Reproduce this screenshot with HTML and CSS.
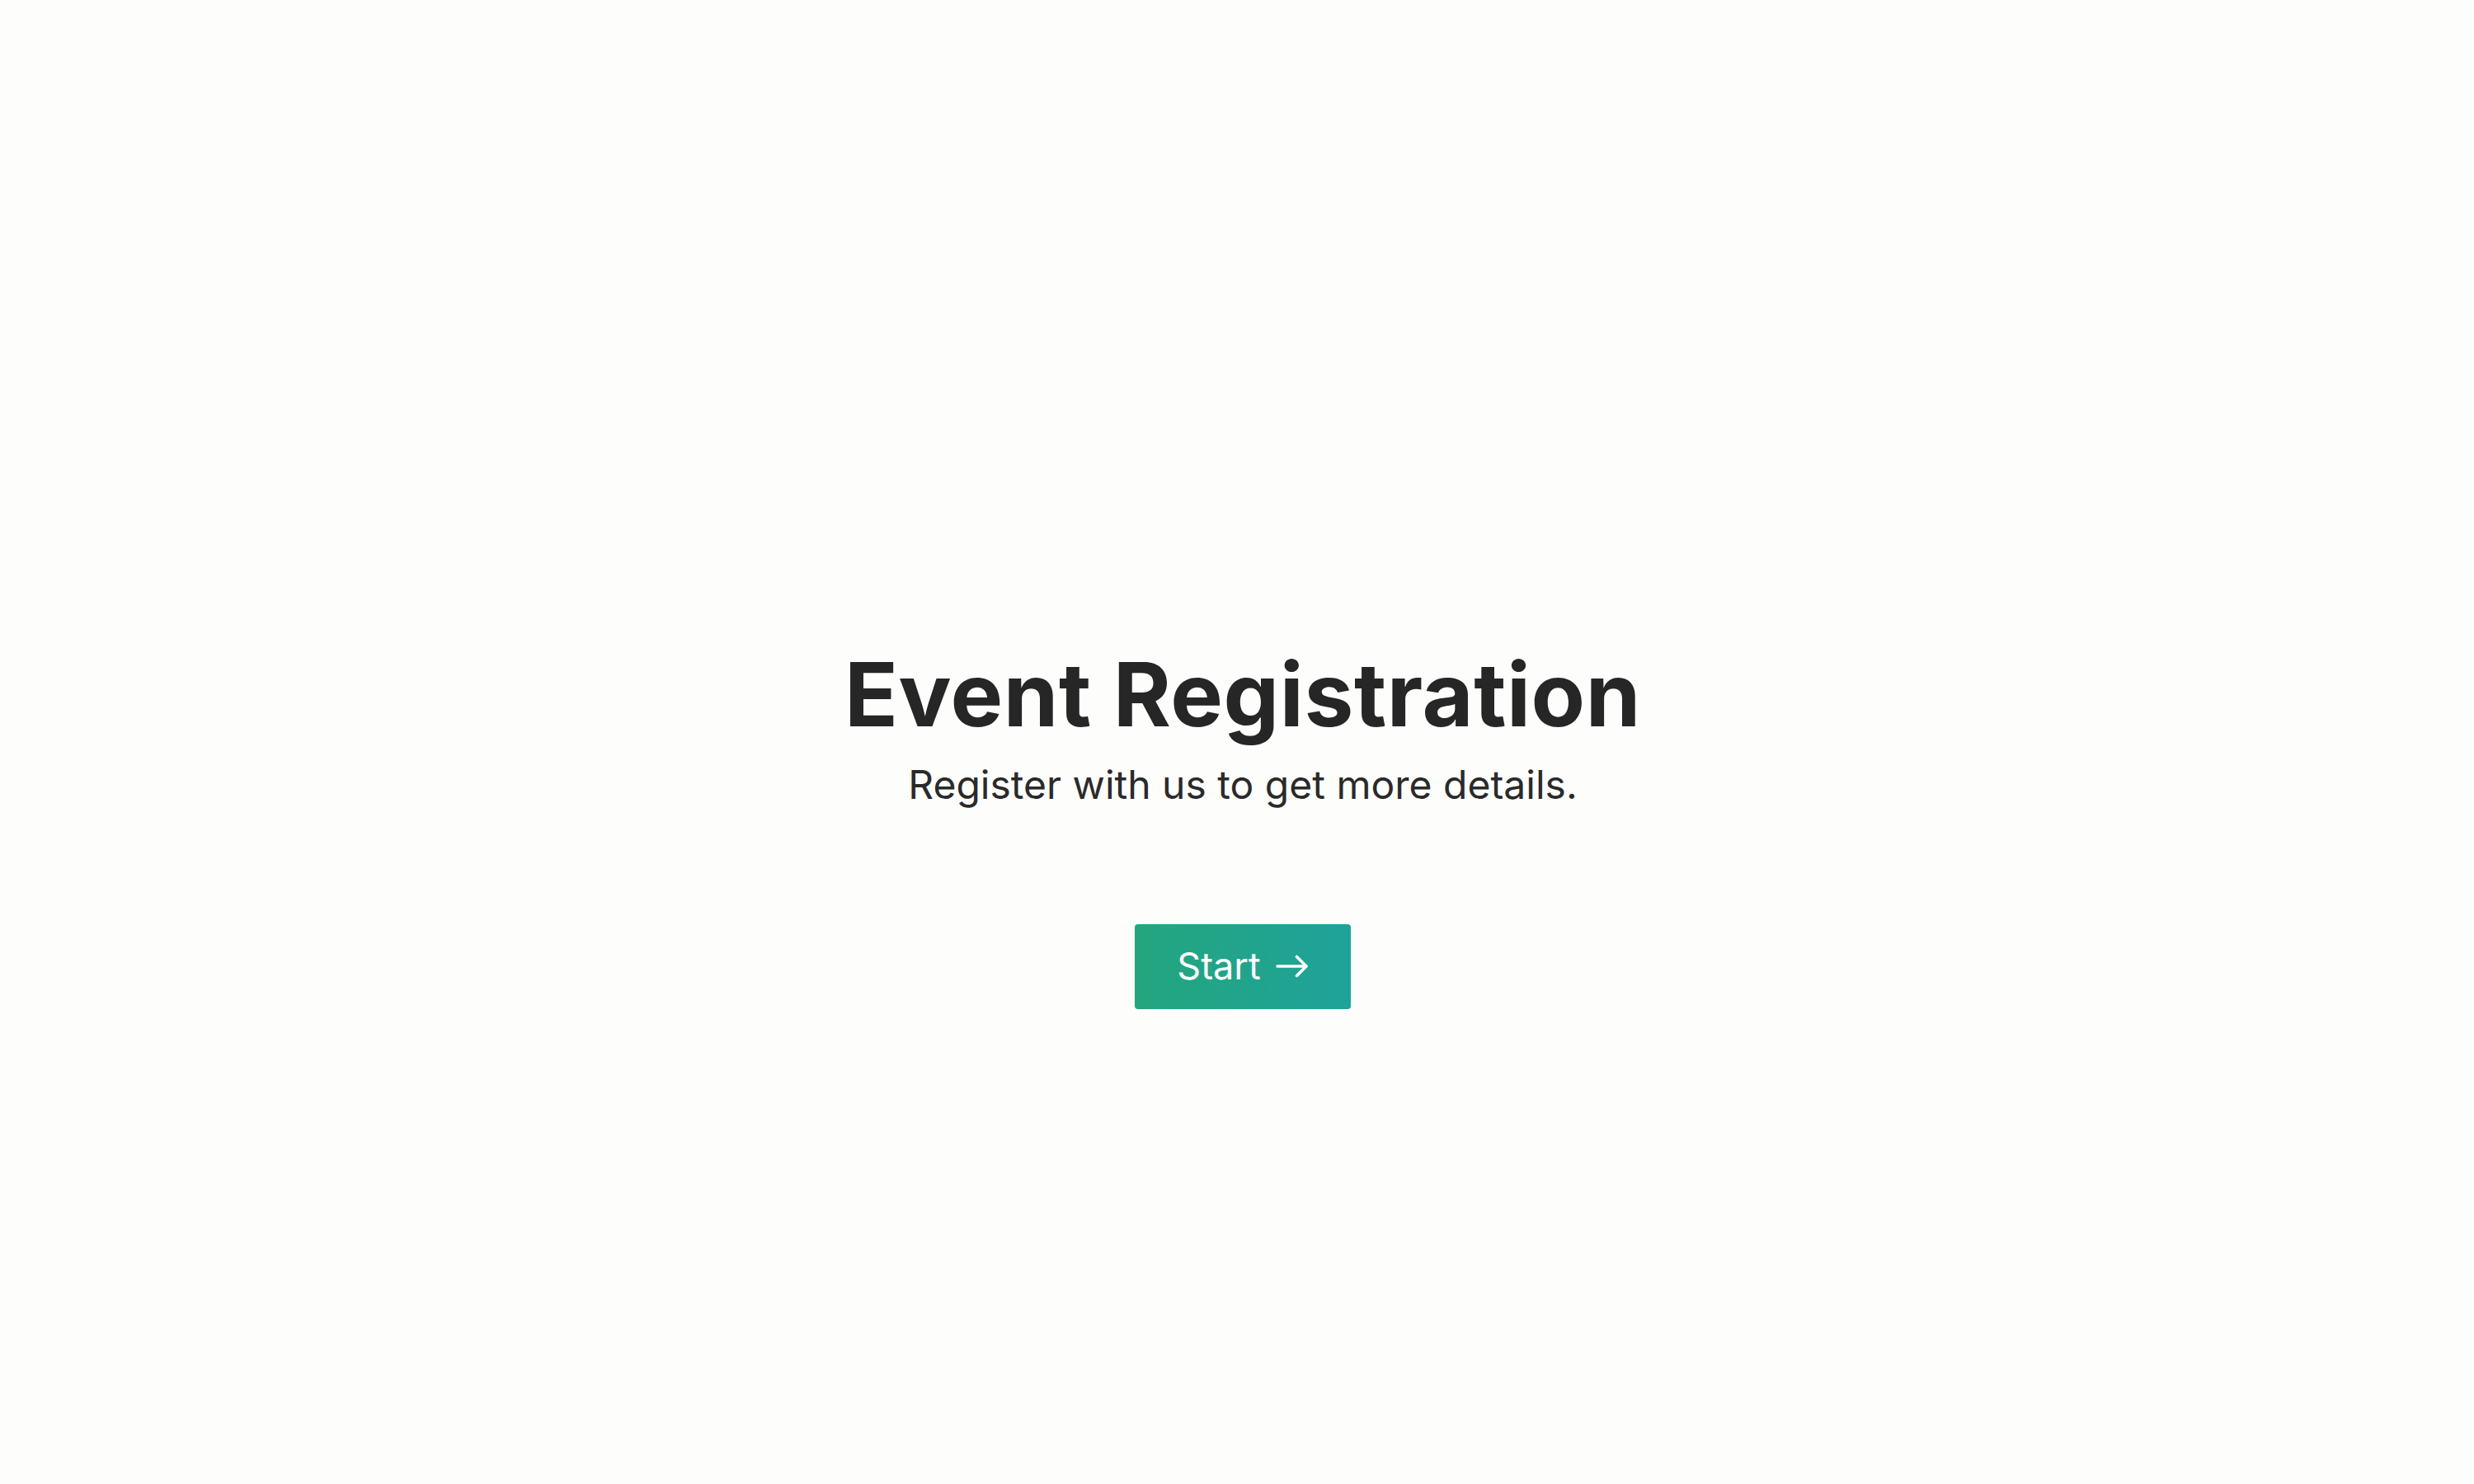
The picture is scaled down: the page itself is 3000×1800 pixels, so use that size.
FILE: index.html
```html
<!DOCTYPE html>
<html lang="en">
<head>
<meta charset="utf-8">
<title>Event Registration</title>
<link rel="stylesheet" href="styles.css">
</head>
<body>
<main class="page">
  <section class="intro">
    <h1 class="title">Event Registration</h1>
    <p class="subtitle">Register with us to get more details.</p>
    <button class="start" type="button">
      <span class="start-label">Start</span>
      <svg class="start-arrow" viewBox="0 0 40 28" width="40" height="28" aria-hidden="true">
        <path d="M2 14H37M25.5 2.5L37 14L25.5 25.5" fill="none" stroke="#ffffff" stroke-width="3.6" stroke-linecap="round" stroke-linejoin="round"/>
      </svg>
    </button>
  </section>
</main>
</body>
</html>
```

FILE: styles.css
```css
html, body {
  margin: 0;
  padding: 0;
}
body {
  background: #fdfdfb;
  font-family: Inter, "Noto Sans", sans-serif;
  color: #262626;
  min-height: 1800px;
  font-variant-ligatures: none;
}
.page {
  display: flex;
  justify-content: center;
  padding-top: 778px;
  padding-left: 14px;
}
.intro {
  display: flex;
  flex-direction: column;
  align-items: center;
}
.title {
  margin: 0;
  font-size: 107px;
  line-height: 1.2;
  font-weight: 700;
  letter-spacing: 0.6px;
  color: #262626;
}
.subtitle {
  margin: 17px 0 0;
  font-size: 48px;
  line-height: 1.2;
  font-weight: 400;
  color: #2a2a2a;
}
.start {
  margin-top: 140px;
  height: 103px;
  width: 262px;
  border: none;
  border-radius: 4px;
  background: linear-gradient(90deg, #23a67d 0%, #1fa29a 100%);
  color: #ffffff;
  font-family: Inter, "Noto Sans", sans-serif;
  font-size: 45px;
  display: flex;
  align-items: center;
  justify-content: center;
  gap: 18px;
  padding: 0;
}
.start-label {
  line-height: 1.2;
}
.start-arrow {
  display: block;
}
```
